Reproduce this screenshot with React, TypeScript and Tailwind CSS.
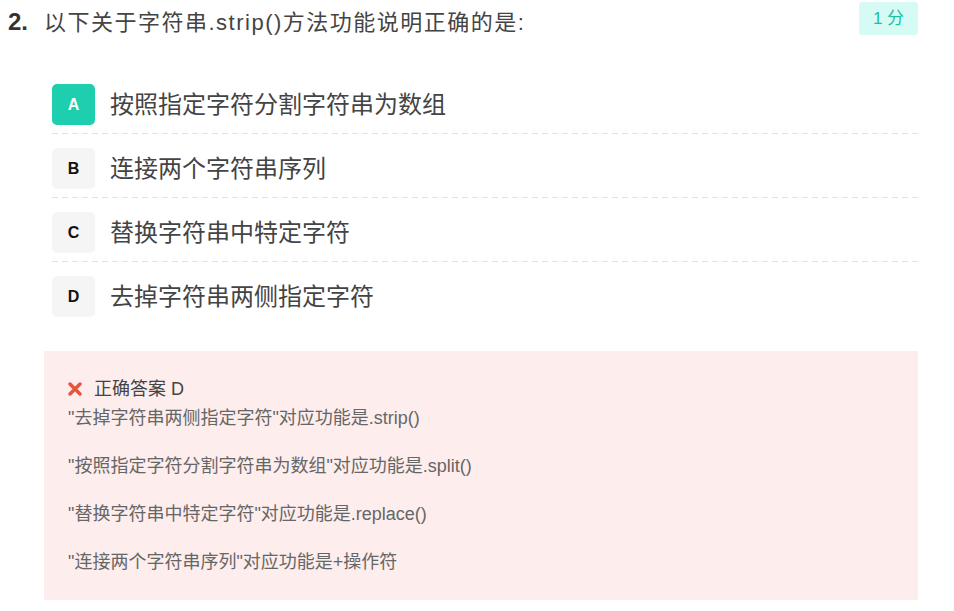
import React from "react";

const font = { fontFamily: '"Liberation Sans", "Noto Sans CJK SC", sans-serif' };

const options = [
  { k: "A", t: "按照指定字符分割字符串为数组", active: true },
  { k: "B", t: "连接两个字符串序列" },
  { k: "C", t: "替换字符串中特定字符" },
  { k: "D", t: "去掉字符串两侧指定字符" },
];

const explains = [
  '"按照指定字符分割字符串为数组"对应功能是.split()',
  '"替换字符串中特定字符"对应功能是.replace()',
  '"连接两个字符串序列"对应功能是+操作符',
];

export default function App() {
  return (
    <div className="w-[954px] h-[611px] bg-white pl-[8px] pr-[36px] overflow-hidden" style={font}>
      <div className="flex items-start">
        <div className="flex items-center h-[44px] flex-1">
          <span className="w-[36px] text-[24px] font-bold text-[#333]">2.</span>
          <span className="text-[22px] tracking-[1.5px] text-[#444]">以下关于字符串.strip()方法功能说明正确的是:</span>
        </div>
        <div className="mt-[2px] h-[33px] w-[59px] rounded-[3px] bg-[#d6fbf5] flex items-center justify-center text-[17px] text-[#1ebfa0]">
          1 分
        </div>
      </div>

      <div className="ml-[44px] mt-[26px]">
        {options.map((o, i) => (
          <div key={o.k}>
            <div className="flex items-center pt-[14px] pb-[8px]">
              <div
                className={
                  o.active
                    ? "w-[43px] h-[41px] rounded-[5px] bg-[#1dcfae] text-white flex items-center justify-center text-[16px] font-bold"
                    : "w-[43px] h-[41px] rounded-[5px] bg-[#f5f5f5] text-[#111] flex items-center justify-center text-[16px] font-bold"
                }
              >
                {o.k}
              </div>
              <span className="ml-[15px] text-[24px] text-[#444] leading-[32px]">{o.t}</span>
            </div>
            {i < options.length - 1 && (
              <div className="h-px bg-[repeating-linear-gradient(to_right,#e2e2e2_0_6px,transparent_6px_10px)]" />
            )}
          </div>
        ))}
      </div>

      <div className="ml-[36px] mt-[26px] bg-[#fdeded] px-[24px] pt-[24px] pb-[24px]">
        <div className="flex items-center h-[28px]">
          <svg width="14" height="14" viewBox="0 0 14 14" className="mr-[12px]">
            <path d="M2 2 L12 12 M12 2 L2 12" stroke="#e8533e" strokeWidth="3.4" strokeLinecap="round" />
          </svg>
          <span className="text-[18px] text-[#444]">正确答案 D</span>
        </div>
        <p className="text-[18px] leading-[28px] text-[#666] mt-[1px]">"去掉字符串两侧指定字符"对应功能是.strip()</p>
        {explains.map((e) => (
          <p key={e} className="text-[18px] leading-[28px] text-[#666] mt-[20px]">{e}</p>
        ))}
      </div>
    </div>
  );
}
